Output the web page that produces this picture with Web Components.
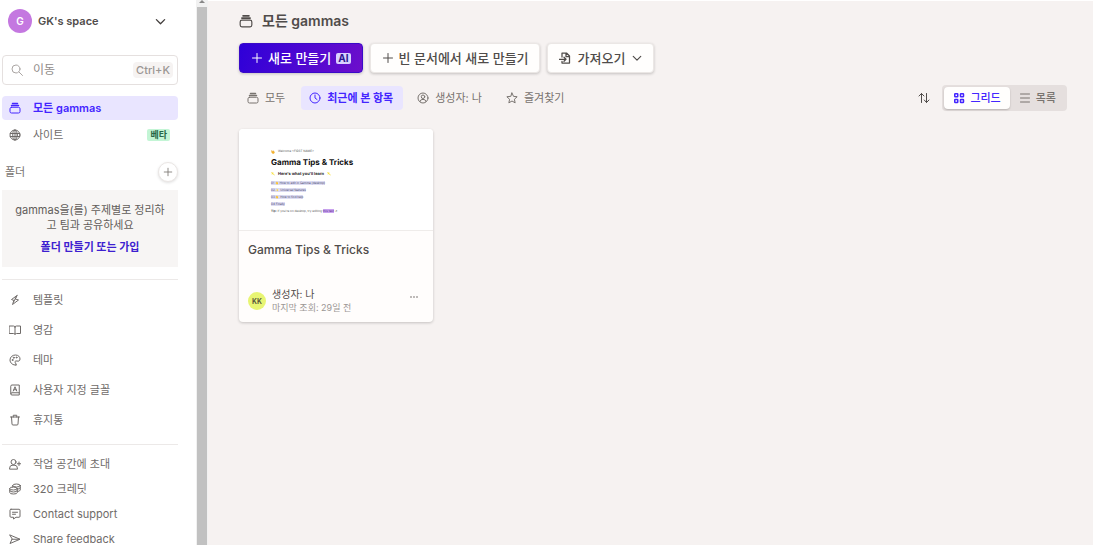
<!DOCTYPE html>
<html lang="ko">
<head>
<meta charset="utf-8">
<meta name="viewport" content="width=device-width, initial-scale=1">
<title>모든 gammas</title>
<style>
html,body{margin:0;height:100%}
body{font-family:Inter,"Noto Sans CJK KR",sans-serif;font-size:11px;line-height:16px;color:#504c4a;background:#fff;overflow:hidden}
</style>
</head>
<body>
<gamma-app></gamma-app>
<script>
const ICONS = {
  stack:'<path d="M7 3h10M5 7h14" stroke-width="3"/><rect x="2" y="10.500" width="20" height="11.500" rx="3"/>',
  chevron:'<path d="M3 8l9 9 9-9" stroke-width="2.800"/>',
  search:'<circle cx="10" cy="10" r="8"/><path d="M16 16l7 7"/>',
  globe:'<circle cx="12" cy="12" r="10"/><ellipse cx="12" cy="12" rx="4.500" ry="10"/><path d="M2.500 9h19M2.500 15h19M12 2v20"/>',
  plus:'<path d="M12 3v18M3 12h18"/>',
  bolt:'<path d="M16 3L5 11l5 2-3 8 12-9-6-2z"/><path d="M14 7l-5 9"/>',
  book:'<path d="M12 5v15M1 4h8q3 0 3 3 0-3 3-3h8v15h-8q-3 0-3 2 0-2-3-2H1z"/>',
  palette:'<path d="M14 22C8 23 2 18 2 12S7 2 13 2s9 4 9 8-3 5-6 4c-4-1-5 2-3 4 2 3 2 4 1 4z"/><circle cx="7" cy="12" r="1"/><circle cx="9.500" cy="7.500" r="1"/><circle cx="15" cy="7" r="1"/>',
  font:'<path d="M20.500 17.500V2H6Q3.500 2 3.500 4.500v15Q3.500 22 6 22h14.500v-4.500H6q-2.500 0-2.500 2"/><path d="M8.500 14L12 5.500 15.500 14M10 11.500h4"/>',
  trash:'<path d="M3 6h18M8.500 6V2.500h7V6M5 6l1 14q0 2 2 2h8q2 0 2-2l1-14"/>',
  invite:'<circle cx="9" cy="8" r="5"/><path d="M1 21.500q0-7 5-7h6q5 0 5 7zM20 8v7M16.500 11.500h7"/>',
  coins:'<ellipse cx="15" cy="5" rx="7.500" ry="3"/><path d="M22.500 5v9q0 2-5 3M7.500 5v3M22.500 9.500q0 2-5 3"/><ellipse cx="9" cy="11" rx="7.500" ry="3"/><path d="M1.500 11v8q0 3 7.500 3t7.500-3v-8M1.500 15q0 3 7.500 3t7.500-3"/>',
  chat:'<path d="M4 2.500h16q2 0 2 2v12q0 2-2 2h-6L9 22v-3.500H4q-2 0-2-2v-12q0-2 2-2zM7 8.500h10M7 12.500h6"/>',
  send:'<path d="M2 4l20 8.500L2 21l4-8.500zM6 12.500h15"/>',
  clock:'<circle cx="12" cy="12" r="10"/><path d="M12 6v6l4 3"/>',
  user:'<circle cx="12" cy="12" r="10"/><circle cx="12" cy="9.500" r="3.500"/><path d="M6 19q1-4 4-4h4q3 0 4 4"/>',
  star:'<path d="M12 2l3 6.700 7.300.8-5.500 5 1.500 7.200L12 18l-6.300 3.700L7.200 14.500l-5.500-5L9 8.700z"/>',
  import:'<path d="M6 10V2h9l6 6v14H6v-3.500M14 2v7h7M1 14.500h13M10 10.500l4 4-4 4" stroke-width="2.500"/>',
  sort:'<path d="M7 21V3M2 8l5-5 5 5M17 3v18M12.500 16l4.500 5 5-5"/>',
  grid:'<g stroke-width="3"><rect x="3.500" y="3.500" width="6" height="6" rx="1"/><rect x="15" y="3.500" width="6" height="6" rx="1"/><rect x="3.500" y="15" width="6" height="6" rx="1"/><rect x="15" y="15" width="6" height="6" rx="1"/></g>',
  list:'<path d="M3 4h18M3 12h18M3 20h18"/>',
  wave:'<path fill="#f7b52c" stroke="#e59b1c" d="M5 3l7 7 1-6 6 5 2 8-6 6-7-3-6-9z"/>',
  spark:'<path fill="#ffe84a" stroke="#f4dd3d" d="M3 3l6 3 3-4 1 7 9 11-11-8-7 1 3-5z"/>'
};
const BASE = `*{box-sizing:border-box}button,input{font:inherit;color:inherit;margin:0}button{cursor:pointer}a{color:inherit;text-decoration:none}`;
function define(name, css, html) {
  customElements.define(name, class extends HTMLElement {
    constructor() {
      super();
      this.attachShadow({mode:'open'});
    }
    connectedCallback() {
      const t = document.createElement('template');
      t.innerHTML = `<style>${BASE}${css}</style>${typeof html === 'function' ? html(this) : html}`;
      this.shadowRoot.replaceChildren(t.content.cloneNode(true));
    }
  });
}

define('g-icon', `:host{display:block;flex:none;width:12px;height:12px}svg{display:block;width:100%;height:100%}`,
  el => `<svg viewBox="0 0 24 24" fill="none" stroke="currentColor" stroke-width="2" stroke-linecap="round" stroke-linejoin="round" aria-hidden="true">${ICONS[el.getAttribute('name')]}</svg>`);

define('g-avatar', `:host{display:grid;place-items:center;flex:none;width:24px;height:24px;border-radius:50%;background:#c478e0;color:#fff;font-size:10px;font-weight:600}
  :host([small]){width:18px;height:18px;background:#e8f573;color:#504c3a;font-size:7px}`, `<slot></slot>`);

define('g-nav-item', `:host{display:block}
  a{display:flex;align-items:center;gap:12px;height:24px;padding:0 8px 0 7px;border-radius:4px;color:#6f6b69;white-space:nowrap}
  :host([active]) a{background:#e9e5ff;color:#4426ff;font-weight:600}
  .label{flex:1}`,
  el => `<a href="#"><g-icon name="${el.getAttribute('icon')}"></g-icon><span class="label"><slot></slot></span><slot name="badge"></slot></a>`);

define('g-badge', `:host{display:block;padding:0 3px;border-radius:2px;background:#c3f5d5;color:#276749;font-size:9px;line-height:12px;font-weight:700}`, `<slot></slot>`);

define('g-sidebar', `:host{display:flex;flex-direction:column;flex:none;width:196px;padding:8px 18px 0 2px}
  header,.search,.folders,.empty,hr{flex:none}
  header{display:flex;align-items:center;gap:6px;padding:0 12px 0 6px;height:26px}
  header button{display:flex;align-items:center;justify-content:space-between;flex:1;padding:0;border:0;background:none;font-weight:600}
  header g-icon{width:11px;height:11px;color:#403c3a}
  .search{display:flex;align-items:center;gap:10px;height:30px;margin:21px 0 11px;padding:0 4px 0 8px;border:1px solid #e5e0df;border-radius:4px;color:#aaa5a3}
  input{flex:1;min-width:0;border:0;outline:0;padding:0;background:none;font-size:12px;color:#504c4a}
  input::placeholder{color:#918c8a;opacity:1}
  kbd{padding:0 3px;border-radius:4px;background:#f6f3f2;color:#9b9694;font:500 11px/16px Inter,sans-serif}
  nav{display:flex;flex-direction:column;gap:3px}
  .folders{display:flex;align-items:center;justify-content:space-between;height:20px;margin:15px 0 8px;padding-left:3px;color:#78736f}
  h2{margin:0;font-size:11px;font-weight:400}
  .add{display:grid;place-items:center;width:20px;height:20px;padding:0;border:1px solid #ebe7e5;border-radius:50%;background:#fff;box-shadow:0 1px 3px #0002}
  .add g-icon{width:10px;height:10px}
  .empty{padding:13px 12px 12px;background:#f7f5f4;text-align:center;color:#625d5a}
  p{margin:0 0 6px;line-height:15px}
  .empty a{display:block;font-weight:700;color:#3d1fd0}
  hr{width:100%;height:1px;margin:12px 0 8px;border:0;background:#ece9e8}
  .tools{gap:6px}
  .help-rule{margin-bottom:7px}
  .help{gap:1px}`,
  `<header><g-avatar>G</g-avatar><button type="button"><span>GK's space</span><g-icon name="chevron"></g-icon></button></header>
  <label class="search"><g-icon name="search"></g-icon><input type="text" placeholder="이동" aria-label="이동"><kbd>Ctrl+K</kbd></label>
  <nav><g-nav-item icon="stack" active>모든 gammas</g-nav-item><g-nav-item icon="globe">사이트<g-badge slot="badge">베타</g-badge></g-nav-item></nav>
  <div class="folders"><h2>폴더</h2><button class="add" type="button" aria-label="폴더 추가"><g-icon name="plus"></g-icon></button></div>
  <section class="empty"><p>gammas을(를) 주제별로 정리하고 팀과 공유하세요</p><a href="#">폴더 만들기 또는 가입</a></section>
  <hr>
  <nav class="tools"><g-nav-item icon="bolt">템플릿</g-nav-item><g-nav-item icon="book">영감</g-nav-item><g-nav-item icon="palette">테마</g-nav-item><g-nav-item icon="font">사용자 지정 글꼴</g-nav-item><g-nav-item icon="trash">휴지통</g-nav-item></nav>
  <hr class="help-rule">
  <nav class="help"><g-nav-item icon="invite">작업 공간에 초대</g-nav-item><g-nav-item icon="coins">320 크레딧</g-nav-item><g-nav-item icon="chat">Contact support</g-nav-item><g-nav-item icon="send">Share feedback</g-nav-item></nav>`);

define('g-scrollbar', `:host{display:flex;flex-direction:column;flex:none;width:12px;background:#f1f1f1;padding-right:1px;border-left:1px solid #f1f1f1}
  .arrow{display:grid;place-items:start center;height:7px}
  .arrow::before{content:"";border:3px solid transparent;border-top:0;border-bottom-color:#888}
  .thumb{flex:1;background:#c1c1c1}`, `<div class="arrow"></div><div class="thumb"></div>`);

define('g-button', `:host{display:block}
  button{display:flex;align-items:center;gap:5px;height:30px;padding:0 10px 0 11px;border:1px solid #ebe7e5;border-radius:4px;background:#fffefd;font-size:13px;font-weight:500;color:#504c4a;white-space:nowrap;box-shadow:0 1px 3px #0003}
  :host([primary]) button{padding:0 11px;border-color:#3a0bc8;background:linear-gradient(110deg,#2e00d8,#6d0fcb);color:#fff}
  :host([menu]) button{gap:7px;padding:0 11px}`,
  `<button type="button"><slot></slot></button>`);

define('g-ai', `:host{display:block;padding:0 2px;border-radius:2px;background:#d9d0ff;color:#2d168f;font-size:10px;line-height:11px;font-weight:700}`, `<slot></slot>`);

define('g-tab', `:host{display:block}
  button{display:flex;align-items:center;gap:6px;height:24px;padding:0 10px 0 8px;border:0;border-radius:4px;background:none;color:#78736f;white-space:nowrap}
  :host([active]) button{background:#e9e5ff;color:#4426ff;font-weight:700}`,
  el => `<button type="button" aria-pressed="${el.hasAttribute('active')}"><g-icon name="${el.getAttribute('icon')}"></g-icon><slot></slot></button>`);

define('g-view-switch', `:host{display:flex;height:26px;padding:2px;border-radius:4px;background:#e5dfde}
  button{display:flex;align-items:center;gap:5px;padding:0 9px;border:0;border-radius:4px;background:none;color:#78736f;font-weight:500;white-space:nowrap}
  .on{background:#fffefd;color:#4426ff;box-shadow:0 1px 2px #0003}`,
  `<button class="on" type="button" aria-pressed="true"><g-icon name="grid"></g-icon>그리드</button><button type="button" aria-pressed="false"><g-icon name="list"></g-icon>목록</button>`);

define('g-preview', `:host{display:flex;flex-direction:column;align-items:flex-start;height:102px;padding:19px 32px 0;background:#fff;border-bottom:1px solid #efecea;color:#555;font-size:3px;line-height:7px;white-space:nowrap;text-rendering:geometricPrecision}
  div{display:flex;align-items:center;gap:3px}
  g-icon{width:4px;height:4px}
  h3{margin:0;font-size:8px;line-height:14px;font-weight:700;color:#111}
  h4{margin:0;font-size:4px;line-height:9px;font-weight:700;color:#222}
  ul{display:flex;flex-direction:column;align-items:flex-start;gap:3px;margin:3px 0 2px;padding:0;list-style:none;line-height:4px}
  li{display:flex}
  li a{background:#dddcf2;color:#44446c}
  mark{background:#c9a3ee;color:#52218a}`,
  `<div><g-icon name="wave"></g-icon>Welcome &lt;FIRST NAME&gt;</div><h3>Gamma Tips &amp; Tricks</h3><div><g-icon name="spark"></g-icon><h4>Here's what you'll learn</h4><g-icon name="spark"></g-icon></div>
  <ul><li><a href="#">01 👋 How to edit in Gamma (desktop)</a></li><li><a href="#">02 ✨ Universal features</a></li><li><a href="#">03 👋 How to find help</a></li><li><a href="#">04 Finally</a></li></ul>
  <div><span><b>Tip:</b> If you're on desktop, try editing <mark>this text</mark> ↗</span></div>`);

define('g-card', `:host{display:flex;flex-direction:column;width:194px;border-radius:4px;background:#fffdfc;box-shadow:0 1px 3px #0003;overflow:hidden}
  .body{padding:10px 9px 8px}
  h2{margin:0 0 29px;font-size:12px;line-height:18px;font-weight:500}
  footer{display:flex;align-items:center;gap:6px;line-height:13px}
  .who{flex:1;font-size:10px}
  .who div+div{font-size:9px;color:#9b9694}
  button{align-self:flex-start;display:flex;gap:1px;padding:8px 6px 6px;border:0;background:none}
  i{width:2px;height:2px;border-radius:50%;background:#aaa5a3}`,
  `<slot name="preview"></slot><div class="body"><h2><slot name="title"></slot></h2><footer><g-avatar small>KK</g-avatar><div class="who"><div><slot name="author"></slot></div><div><slot name="seen"></slot></div></div><button type="button" aria-label="더 보기"><i></i><i></i><i></i></button></footer></div>`);

define('g-main', `:host{display:block;flex:1;min-width:0;margin-top:1px;padding:10px 26px 0 31px;background:#f6f2f1}
  h1{display:flex;align-items:center;gap:9px;margin:0 0 12px;font-size:14px;line-height:20px;font-weight:600}
  h1 g-icon{width:14px;height:14px}
  .actions{display:flex;gap:7px}
  .arrow{width:10px;height:10px}
  .bar{display:flex;align-items:center;gap:6px;margin:12px 0 18px}
  .sort{display:grid;padding:0;margin:0 6px 0 auto;border:0;background:none}`,
  `<h1><g-icon name="stack"></g-icon>모든 gammas</h1>
  <div class="actions"><g-button primary><g-icon name="plus"></g-icon>새로 만들기<g-ai>AI</g-ai></g-button><g-button><g-icon name="plus"></g-icon>빈 문서에서 새로 만들기</g-button><g-button menu><g-icon name="import"></g-icon>가져오기<g-icon class="arrow" name="chevron"></g-icon></g-button></div>
  <div class="bar"><g-tab icon="stack">모두</g-tab><g-tab icon="clock" active>최근에 본 항목</g-tab><g-tab icon="user">생성자: 나</g-tab><g-tab icon="star">즐겨찾기</g-tab><button class="sort" type="button" aria-label="정렬"><g-icon name="sort"></g-icon></button><g-view-switch></g-view-switch></div>
  <g-card><g-preview slot="preview"></g-preview><span slot="title">Gamma Tips &amp; Tricks</span><span slot="author">생성자: 나</span><span slot="seen">마지막 조회: 29일 전</span></g-card>`);

define('gamma-app', `:host{display:flex;height:100vh;overflow:hidden}`, `<g-sidebar></g-sidebar><g-scrollbar></g-scrollbar><g-main></g-main>`);
</script>
</body>
</html>
